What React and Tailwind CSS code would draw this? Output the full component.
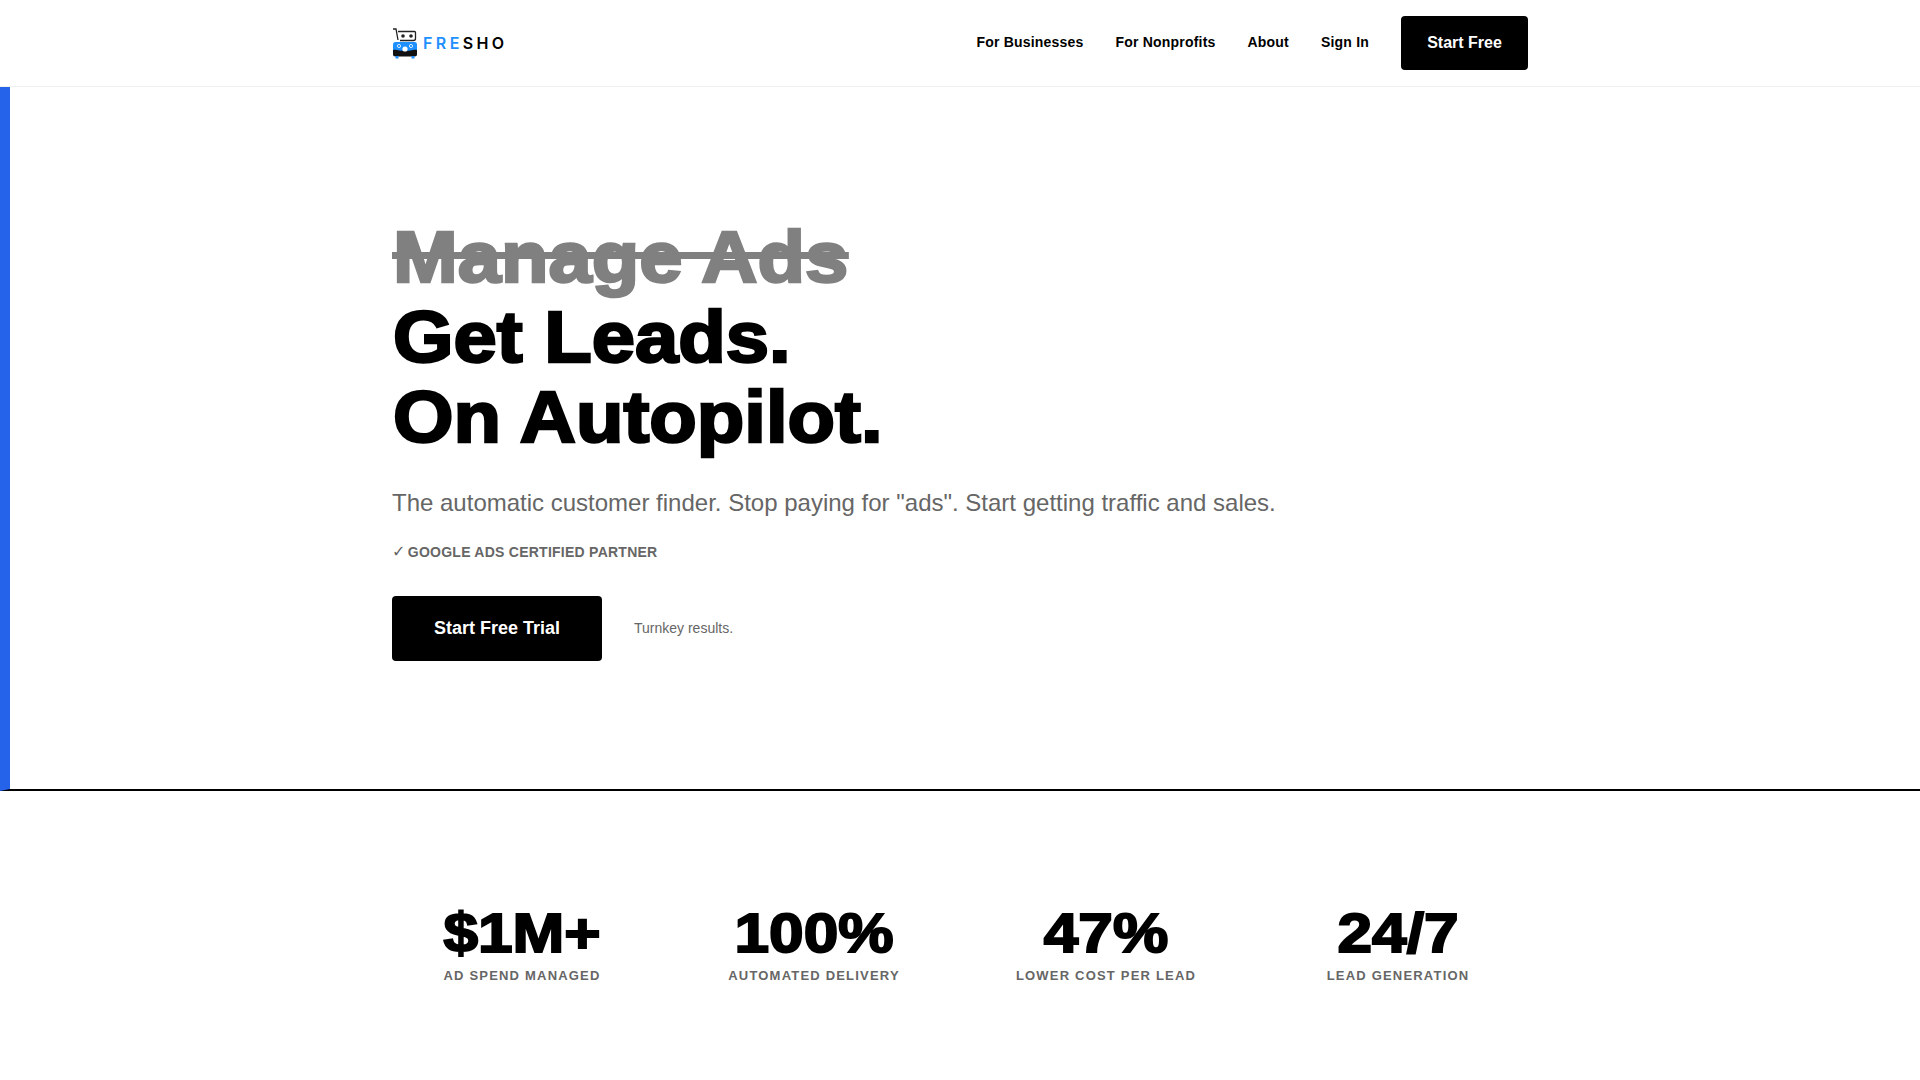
import React from 'react';

const font = 'font-["Liberation_Sans",Arial,sans-serif]';

const Logo = () => (
  <svg width="26" height="31" viewBox="0 0 26 31" className="shrink-0">
    <path d="M1 1h3l2 11" fill="none" stroke="#222" strokeWidth="1.3" />
    <path d="M6 3.5h16.5a1 1 0 0 1 1 1v6a2 2 0 0 1-2 2H8" fill="none" stroke="#222" strokeWidth="1.3" />
    <circle cx="11" cy="8" r="1.8" fill="#222" />
    <circle cx="19" cy="8" r="1.8" fill="#222" />
    <rect x="1" y="14" width="24" height="14" rx="2.5" fill="#1e90ff" />
    <path d="M1 22c4-1 6 1 12 1s8-2 12-1v4a2.5 2.5 0 0 1-2.5 2.5h-19A2.5 2.5 0 0 1 1 26z" fill="#111" />
    <circle cx="13" cy="21" r="2.6" fill="#fff" />
    <circle cx="7" cy="18" r="1.6" fill="none" stroke="#d5ecff" strokeWidth="1" />
    <circle cx="19" cy="18" r="1.6" fill="none" stroke="#d5ecff" strokeWidth="1" />
    <rect x="3.5" y="28" width="3" height="2.5" fill="#1e90ff" />
    <rect x="19.5" y="28" width="3" height="2.5" fill="#1e90ff" />
  </svg>
);

const navLinks = ['For Businesses', 'For Nonprofits', 'About', 'Sign In'];

const stats = [
  { value: '$1M+', label: 'AD SPEND MANAGED' },
  { value: '100%', label: 'AUTOMATED DELIVERY' },
  { value: '47%', label: 'LOWER COST PER LEAD' },
  { value: '24/7', label: 'LEAD GENERATION' },
];

const App = () => {
  return (
    <div className={`${font} bg-white text-black min-h-[1080px] overflow-hidden`}>
      <nav className="h-[87px] border-b border-[#f0f0f0]">
        <div className="w-[1136px] mx-auto h-full flex items-center justify-between">
          <div className="flex items-center gap-[5px]">
            <Logo />
            <span className="text-[16px] font-semibold tracking-[3.4px] font-['Inter',sans-serif]">
              <span className="text-[#1e90ff]">FRE</span>SHO
            </span>
          </div>
          <div className="flex items-center gap-8">
            {navLinks.map(link => (
              <a key={link} className="text-sm font-bold tracking-[0.2px] -mt-[2px]">{link}</a>
            ))}
            <button className="w-[127px] h-[54px] bg-black text-white rounded text-base font-bold pb-[1px]">Start Free</button>
          </div>
        </div>
      </nav>

      <section className="h-[704px] border-l-[10px] border-l-[#2563eb] border-b-2 border-b-black pt-[130px]">
        <div className="w-[1136px] ml-[382px]">
          <h1 className="pl-[1px] text-[72px] leading-[80px] font-black [-webkit-text-stroke:2.5px_currentColor] origin-left scale-x-[1.08]">
            <span className="relative inline-block text-[#808080]">
              Manage Ads
              <span className="absolute -left-[1px] -right-[1px] top-[35px] h-[7px] bg-[#808080]"></span>
            </span><br />
            Get Leads.<br />
            On Autopilot.
          </h1>
          <p className="mt-[28px] text-2xl leading-9 text-[#666]">The automatic customer finder. Stop paying for "ads". Start getting traffic and sales.</p>
          <p className="mt-[21px] text-sm font-bold text-[#666] tracking-[0.25px]">
            <span className="inline-block -mr-[2px] text-[16px] leading-none font-normal font-['DejaVu_Sans',sans-serif]">✓</span> GOOGLE ADS CERTIFIED PARTNER
          </p>
          <div className="mt-[34px] flex items-center gap-8">
            <button className="w-[210px] h-[65px] bg-black text-white rounded text-lg font-bold pb-[1px]">Start Free Trial</button>
            <span className="text-sm text-[#666] pb-[1px]">Turnkey results.</span>
          </div>
        </div>
      </section>

      <section className="pt-[111px]">
        <div className="w-[1136px] mx-auto grid grid-cols-4 gap-[32px] text-center">
          {stats.map(stat => (
            <div key={stat.label} className="px-4">
              <div className="text-[56px] leading-[62px] font-black [-webkit-text-stroke:2px_currentColor] scale-x-[1.11]">{stat.value}</div>
              <div className="mt-[2px] text-[13px] font-bold tracking-[1.2px] text-[#666]">{stat.label}</div>
            </div>
          ))}
        </div>
      </section>
    </div>
  );
};

export default App;
